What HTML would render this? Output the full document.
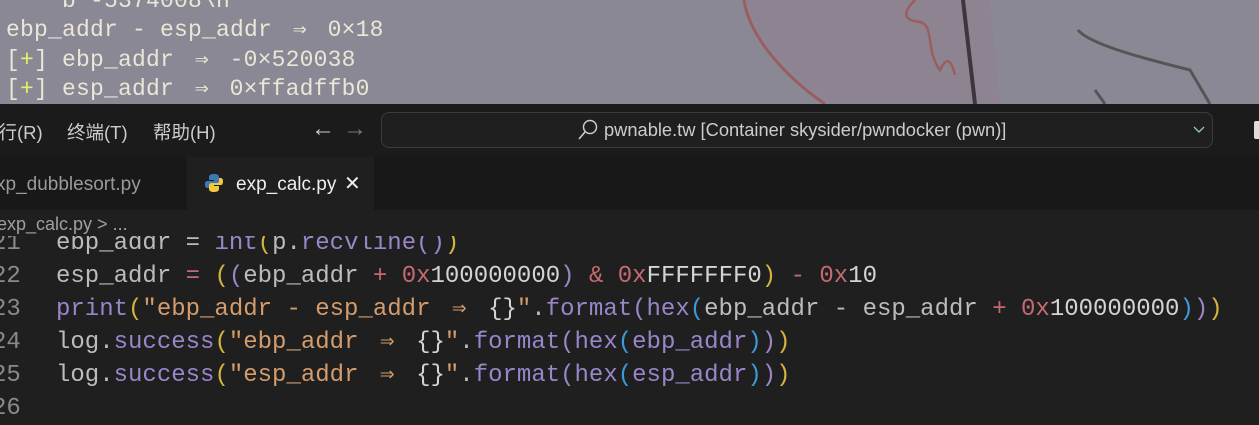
<!DOCTYPE html>
<html><head><meta charset="utf-8"><style>
*{margin:0;padding:0;box-sizing:border-box}
body{width:1259px;height:424px;overflow:hidden;background:#1f1f1f;position:relative;font-family:"Liberation Sans","Noto Sans CJK SC",sans-serif}
.term{position:absolute;left:0;top:0;width:1259px;height:104px;background:#8a8894;overflow:hidden}
.tl{position:absolute;left:6px;font-family:"Liberation Mono","DejaVu Sans Mono",monospace;font-size:23px;color:#ebe6d6;white-space:pre;letter-spacing:0.2px}
.title{position:absolute;left:0;top:104px;width:1259px;height:53px;background:#1b1b1b}
.tabs{position:absolute;left:0;top:157px;width:1259px;height:53px;background:#181818}
.tab{position:absolute;top:0;height:53px;font-size:19px;line-height:55px}
.code{position:absolute;left:56px;font-family:"Liberation Mono","DejaVu Sans Mono",monospace;font-size:24px;color:#bcbcbc;white-space:pre;line-height:33px}
.ar{display:inline-block;width:2ch;text-align:center}
.p{color:#9a85c9}.y{color:#d6b33e}.n{color:#c56a72}.s{color:#d49c6c}.b{color:#3b9ada}.w{color:#d4d4d4}
</style></head><body>
<div class="term">
<svg style="position:absolute;left:0;top:0" width="1259" height="104"><path d="M745 0 C 760 50,800 80,830 104 L1000 104 L990 0 Z" fill="#8e8390" opacity="0.8"/><path d="M744 0 C 750 40,790 80,825 104" stroke="#9a5e5e" stroke-width="3" fill="none"/><path d="M915 0 C905 10,900 20,920 22 C 935 26,925 50,940 70 C 945 60,950 55,955 75" stroke="#9a5e5e" stroke-width="2.5" fill="none"/><path d="M963 0 L975 104" stroke="#3e3540" stroke-width="4"/><path d="M1078 30 C1090 45,1150 60,1190 70 L1210 104" stroke="#555" stroke-width="3" fill="none"/><path d="M1095 90 L1105 104" stroke="#555" stroke-width="3"/></svg>
<div class="tl" style="top:-12px;left:62px">b'-5374008\n'</div>
<div class="tl" style="top:16px">ebp_addr - esp_addr <span class="ar">⇒</span> 0×18</div>
<div class="tl" style="top:46px">[<span style="color:#e6f06a">+</span>] ebp_addr <span class="ar">⇒</span> -0×520038</div>
<div class="tl" style="top:75px">[<span style="color:#e6f06a">+</span>] esp_addr <span class="ar">⇒</span> 0×ffadffb0</div>
</div>
<div class="code" style="top:227px">ebp_addr = <span class="p">int</span><span class="y">(</span>p.<span class="p">recvline</span><span class="p">()</span><span class="y">)</span>
esp_addr <span class="n">=</span> <span class="y">(</span><span class="p">(</span>ebp_addr <span class="n">+</span> <span class="n">0x</span><span class="w">100000000</span><span class="p">)</span> <span class="n">&amp;</span> <span class="n">0x</span><span class="w">FFFFFFF0</span><span class="y">)</span> <span class="n">-</span> <span class="n">0x</span><span class="w">10</span>
<span class="p">print</span><span class="y">(</span><span class="s">"ebp_addr - esp_addr <span class="ar">⇒</span> </span><span class="w">{}</span><span class="s">"</span>.<span class="p">format</span><span class="p">(hex</span><span class="b">(</span>ebp_addr - esp_addr <span class="n">+</span> <span class="n">0x</span><span class="w">100000000</span><span class="b">)</span><span class="p">)</span><span class="y">)</span>
log.<span class="p">success</span><span class="y">(</span><span class="s">"ebp_addr <span class="ar">⇒</span> </span><span class="w">{}</span><span class="s">"</span>.<span class="p">format</span><span class="p">(hex</span><span class="b">(</span><span class="p">ebp_addr</span><span class="b">)</span><span class="p">)</span><span class="y">)</span>
log.<span class="p">success</span><span class="y">(</span><span class="s">"esp_addr <span class="ar">⇒</span> </span><span class="w">{}</span><span class="s">"</span>.<span class="p">format</span><span class="p">(hex</span><span class="b">(</span><span class="p">esp_addr</span><span class="b">)</span><span class="p">)</span><span class="y">)</span>
</div>
<div class="code" style="top:227px;left:-8px;color:#8a8a8a">21
22
23
24
25
26</div>
<div style="position:absolute;left:0;top:210px;width:1259px;height:26px;background:#1f1f1f"></div>
<div style="position:absolute;left:-3px;top:214px;color:#a0a0a0;font-size:18px">exp_calc.py &gt; ...</div>
<div class="title">
<div style="position:absolute;left:-20px;top:15px;color:#ccc;font-size:18.5px">运行(R)</div>
<div style="position:absolute;left:67px;top:15px;color:#ccc;font-size:18.5px">终端(T)</div>
<div style="position:absolute;left:153px;top:15px;color:#ccc;font-size:18.5px">帮助(H)</div>
<div style="position:absolute;left:311px;top:11px;color:#ccc;font-size:24px">←</div>
<div style="position:absolute;left:343px;top:11px;color:#777;font-size:24px">→</div>
<div style="position:absolute;left:381px;top:8px;width:832px;height:36px;border:1px solid #3c3c3c;border-radius:8px;background:#1f1f1f"></div>
<svg style="position:absolute;left:577px;top:14px" width="22" height="24"><circle cx="13" cy="9" r="6.5" stroke="#ccc" stroke-width="1.5" fill="none"/><path d="M8 14 L2 21" stroke="#ccc" stroke-width="1.6"/></svg>
<div style="position:absolute;left:604px;top:15px;color:#ccc;font-size:18.3px">pwnable.tw [Container skysider/pwndocker (pwn)]</div>
<svg style="position:absolute;left:1193px;top:22px" width="12" height="8"><path d="M1 1 L6 6 L11 1" stroke="#9cc" stroke-width="1.3" fill="none"/></svg>
<div style="position:absolute;left:1254px;top:17px;width:8px;height:18px;background:#ddd;border-radius:2px"></div>
</div>
<div class="tabs">
<div class="tab" style="left:-4px;color:#9a9a9a">xp_dubblesort.py</div>
<div class="tab" style="left:187px;width:187px;background:#1f1f1f;color:#eee">
<svg style="position:absolute;left:17px;top:16px" width="20" height="20"><path d="M10 1 C5 1 5 3 5 5 V7 H10 V8 H3 C1 8 1 11 1 12 C1 15 3 15 4 15 H5 V12 C5 10 7 10 8 10 H13 C14 10 15 9 15 8 V4 C15 2 13 1 10 1Z" fill="#3d7ab5"/><path d="M10 19 C15 19 15 17 15 15 V13 H10 V12 H17 C19 12 19 9 19 8 C19 5 17 5 16 5 H15 V8 C15 10 13 10 12 10 H7 C6 10 5 11 5 12 V16 C5 18 7 19 10 19Z" fill="#f0c93d"/></svg>
<span style="position:absolute;left:49px">exp_calc.py</span>
<span style="position:absolute;left:157px;font-size:20px">✕</span>
</div>
</div>
</body></html>
